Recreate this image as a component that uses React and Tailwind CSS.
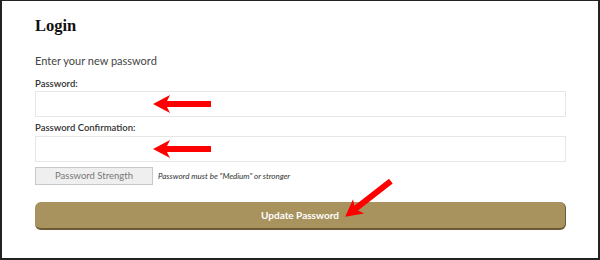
import React from "react";

function Arrow({ className, rotate = 0 }) {
  // red arrow pointing left, drawn in a 60x20 box
  return (
    <svg
      className={className}
      width="60"
      height="20"
      viewBox="0 0 60 20"
      style={{ transform: `rotate(${rotate}deg)` }}
    >
      <path d="M1 10 L18 1 L15 7 L59 7 L59 13 L15 13 L18 19 Z" fill="#ff0000" />
    </svg>
  );
}

export default function App() {
  return (
    <div className="relative w-[600px] h-[260px] bg-white border-t border-l-2 border-r-2 border-b-2 border-[#222] font-['Lato',sans-serif] overflow-hidden">
      <div className="pl-[33px] pr-[32px] pt-[14px]">
        <h1 className="font-['Liberation_Serif',serif] font-bold text-[16.5px] leading-[22px] text-[#111]">
          Login
        </h1>
        <p className="mt-[16px] text-[11px] leading-[16px] text-[#444]">
          Enter your new password
        </p>

        <label className="block mt-[9px] text-[9.5px] leading-[12px] font-semibold text-[#333]">
          Password:
        </label>
        <div className="mt-[1px] h-[26px] border border-[#e6e6e6] bg-white" />

        <label className="block mt-[5px] text-[9.5px] leading-[12px] font-semibold text-[#333]">
          Password Confirmation:
        </label>
        <div className="mt-[2px] h-[26px] border border-[#e6e6e6] bg-white" />

        <div className="mt-[5px] flex items-center gap-[5px]">
          <div className="w-[118px] h-[18px] flex items-center justify-center border border-[#c8c8c8] bg-[#efefef] text-[9.5px] text-[#777]">
            Password Strength
          </div>
          <span className="italic text-[8px] text-[#333]">
            Password must be "Medium" or stronger
          </span>
        </div>

        <button className="mt-[17px] w-full h-[28px] rounded-[6px] bg-[#a8925e] border-b-2 border-r border-[#6b5a35] text-white text-[10px] font-bold">
          Update Password
        </button>
      </div>

      <Arrow className="absolute left-[150px] top-[93px]" />
      <Arrow className="absolute left-[150px] top-[138px]" />
      <Arrow className="absolute left-[336px] top-[188px]" rotate={-38} />
    </div>
  );
}
